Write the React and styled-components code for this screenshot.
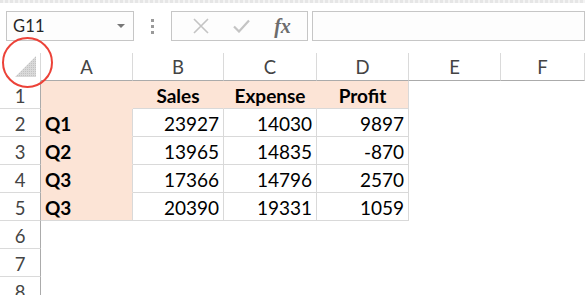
import styled, { createGlobalStyle } from "styled-components";

const GlobalStyle = createGlobalStyle`
  html, body {
    margin: 0;
    padding: 0;
    background: #ffffff;
  }
  body {
    font-family: Lato, "Open Sans", sans-serif;
  }
`;

const columns = ["A", "B", "C", "D", "E", "F"];

const rows = [
  { label: "Q1", sales: 23927, expense: 14030, profit: 9897 },
  { label: "Q2", sales: 13965, expense: 14835, profit: -870 },
  { label: "Q3", sales: 17366, expense: 14796, profit: 2570 },
  { label: "Q3", sales: 20390, expense: 19331, profit: 1059 },
];

const App = () => {
  return (
    <Page>
      <GlobalStyle />
      <TopBand />
      <Toolbar>
        <NameBox>
          <NameText>G11</NameText>
          <DropArrow />
        </NameBox>
        <Grip>
          <span />
          <span />
          <span />
        </Grip>
        <FxButtons>
          <IconSlot>
            <svg width="16" height="16" viewBox="0 0 16 16">
              <path d="M1 1 L15 15 M15 1 L1 15" stroke="#c4c4c4" strokeWidth="1.6" fill="none" />
            </svg>
          </IconSlot>
          <IconSlot>
            <svg width="17" height="14" viewBox="0 0 17 14">
              <path d="M1 7.5 L6 12.5 L16 1.5" stroke="#c4c4c4" strokeWidth="2.2" fill="none" />
            </svg>
          </IconSlot>
          <FxLabel>fx</FxLabel>
        </FxButtons>
        <FormulaBar />
      </Toolbar>

      <Sheet>
        <Corner>
          <svg width="22" height="23" viewBox="0 0 22 23">
            <defs>
              <pattern id="hatch" width="2" height="2" patternUnits="userSpaceOnUse">
                <rect width="2" height="2" fill="#d9d9d9" />
                <rect width="1" height="1" fill="#c2c2c2" />
              </pattern>
            </defs>
            <polygon points="21,1 21,22 0,22" fill="url(#hatch)" />
          </svg>
          <Ring />
        </Corner>
        {columns.map((c) => (
          <ColHeader key={c}>{c}</ColHeader>
        ))}

        <RowHeader>1</RowHeader>
        <Cell $fill="peach" />
        <Cell $fill="peach" $head>Sales</Cell>
        <Cell $fill="peach" $head>Expense</Cell>
        <Cell $fill="peach" $head $last>Profit</Cell>
        <Cell />
        <Cell />

        {rows.map((r, i) => (
          <Row key={i} index={i + 2} data={r} bottom={i === rows.length - 1} />
        ))}

        {[6, 7, 8].map((n) => (
          <EmptyRow key={n} n={n} />
        ))}
      </Sheet>
    </Page>
  );
};

const Row = ({ index, data, bottom }) => (
  <>
    <RowHeader>{index}</RowHeader>
    <Cell $fill="peach" $label $bottom={bottom}>{data.label}</Cell>
    <Cell $num $bordered>{data.sales}</Cell>
    <Cell $num $bordered>{data.expense}</Cell>
    <Cell $num $bordered>{data.profit}</Cell>
    <Cell />
    <Cell />
  </>
);

const EmptyRow = ({ n }) => (
  <>
    <RowHeader>{n}</RowHeader>
    {columns.map((c) => (
      <Cell key={c} />
    ))}
  </>
);

export default App;

const Page = styled.div`
  width: 585px;
  height: 295px;
  overflow: hidden;
  background: #ffffff;
`;

const TopBand = styled.div`
  height: 3px;
  background: repeating-linear-gradient(
    90deg,
    #e6e6e6 0 3px,
    #f3f3f3 3px 5px
  );
`;

const Toolbar = styled.div`
  height: 50px;
  box-sizing: border-box;
  padding: 8px 0 0 6px;
  display: flex;
  align-items: flex-start;
  background: #ffffff;
`;

const Box = styled.div`
  height: 30px;
  box-sizing: border-box;
  border: 1px solid #c6c6c6;
  background: #fdfdfd;
`;

const NameBox = styled(Box)`
  width: 128px;
  display: flex;
  align-items: center;
  justify-content: space-between;
  padding: 0 8px 0 6px;
`;

const NameText = styled.span`
  font-size: 16.5px;
  color: #262626;
  letter-spacing: 0.2px;
`;

const DropArrow = styled.span`
  width: 0;
  height: 0;
  border-left: 4px solid transparent;
  border-right: 4px solid transparent;
  border-top: 4px solid #777777;
`;

const Grip = styled.div`
  width: 37px;
  height: 30px;
  display: flex;
  flex-direction: column;
  align-items: center;
  justify-content: center;
  gap: 3px;

  span {
    width: 3px;
    height: 3px;
    background: #9a9a9a;
  }
`;

const FxButtons = styled(Box)`
  width: 137px;
  display: flex;
  align-items: center;
  justify-content: space-around;
  padding: 0 4px 0 8px;
`;

const IconSlot = styled.div`
  width: 30px;
  display: flex;
  justify-content: center;
  align-items: center;
`;

const FxLabel = styled.span`
  font-family: "Liberation Serif", serif;
  font-style: italic;
  font-weight: bold;
  font-size: 20px;
  color: #6c6c6c;
  width: 30px;
  text-align: center;
`;

const FormulaBar = styled(Box)`
  flex: 1;
  margin-left: 4px;
`;

const Sheet = styled.div`
  display: grid;
  grid-template-columns: 41px 92px 91px 93px 92px 92px 1fr;
  grid-auto-rows: 28px;
`;

const Corner = styled.div`
  position: relative;
  box-sizing: border-box;
  border-right: 1px solid #d8d8d8;
  display: flex;
  align-items: flex-end;
  justify-content: flex-end;
  padding: 0 3px 3px 0;
`;

const Ring = styled.div`
  position: absolute;
  left: 2px;
  top: -16px;
  width: 51px;
  height: 51px;
  box-sizing: border-box;
  border: 2.5px solid #ec4238;
  border-radius: 50%;
`;

const ColHeader = styled.div`
  box-sizing: border-box;
  border-right: 1px solid #dadada;
  border-bottom: 1px solid #ababab;
  display: flex;
  align-items: center;
  justify-content: center;
  padding-top: 1px;
  font-size: 18.5px;
  color: #444444;
`;

const RowHeader = styled.div`
  box-sizing: border-box;
  border-right: 1px solid #ababab;
  border-bottom: 1px solid #dadada;
  display: flex;
  align-items: center;
  justify-content: center;
  padding-top: 2px;
  font-size: 18.5px;
  color: #444444;
`;

const Cell = styled.div`
  box-sizing: border-box;
  display: flex;
  align-items: center;
  padding: 2px 4px 0 4px;
  font-size: 19px;
  color: #000000;
  background: ${(p) => (p.$fill === "peach" ? "#fce4d6" : "#ffffff")};
  justify-content: ${(p) => (p.$num ? "flex-end" : p.$head ? "center" : "flex-start")};
  font-weight: ${(p) => (p.$head || p.$label ? 700 : 400)};
  border-right: 1px solid
    ${(p) => (p.$bordered || p.$label || p.$last ? "#d9d9d9" : p.$head ? "#fce4d6" : "transparent")};
  border-bottom: 1px solid
    ${(p) =>
      p.$bordered || p.$head || p.$bottom
        ? "#d9d9d9"
        : p.$fill === "peach"
        ? "#fce4d6"
        : "transparent"};
`;
